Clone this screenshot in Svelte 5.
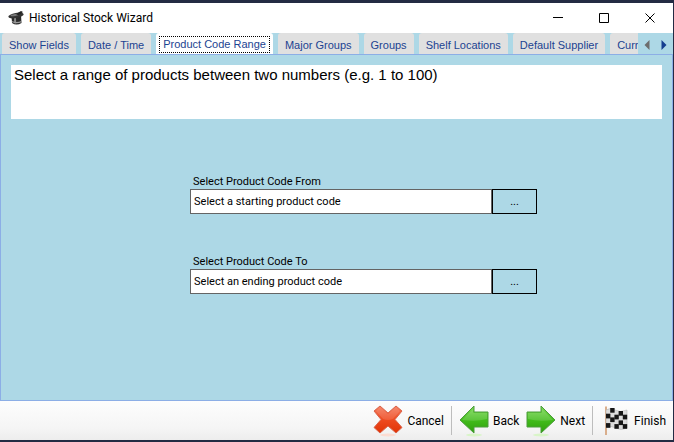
<script lang="ts">
  const tabs = [
    'Show Fields',
    'Date / Time',
    'Product Code Range',
    'Major Groups',
    'Groups',
    'Shelf Locations',
    'Default Supplier',
    'Curr'
  ];

  const fields = [
    { id: 'code-from', label: 'Select Product Code From', text: 'Select a starting product code' },
    { id: 'code-to', label: 'Select Product Code To', text: 'Select an ending product code' }
  ];

  // dark squares of the finish flag, as [column, row]
  const squares = [
    [1, 0], [3, 0],
    [0, 1], [2, 1], [4, 1],
    [1, 2], [3, 2],
    [0, 3], [2, 3], [4, 3]
  ];
  const wave = [0, -1, 1, 2, 1];

  let active = $state('Product Code Range');
  let values = $state(fields.map((field) => field.text));
</script>

{#snippet arrow(flip: boolean)}
  <svg class:flip width="30" height="32" viewBox="0 0 30 32" aria-hidden="true">
    <defs>
      <linearGradient id="green" x1="0" y1="0" x2="0" y2="1">
        <stop offset="0" stop-color="#7ed957" />
        <stop offset="0.5" stop-color="#43bd1c" />
        <stop offset="1" stop-color="#2ea00c" />
      </linearGradient>
    </defs>
    <ellipse cx="15" cy="30" rx="8" ry="1.5" fill="#d9f5c8" />
    <path d="M1 15 15 1v6h14v15H15v6z" fill="url(#green)" stroke="#4c9c3c" stroke-linejoin="round" />
    <path d="M3 15 14 4v4h14v6q-10 3-25 1z" fill="#fff" opacity="0.15" />
  </svg>
{/snippet}

<div class="window">
  <header class="title-bar">
    <svg width="16" height="16" viewBox="0 0 16 16" aria-hidden="true">
      <path d="M3.500 6 13 5.500l.5 7.500q-5 3-9.500 0z" fill="#2b2b2b" />
      <path d="M6 7.500l2-.2.2 6.200-2-.3z" fill="#8b8b8b" />
      <path d="M4 11q4.500 2 9.300 0v1.200q-4.500 2-9.200 0z" fill="#9a9a9a" />
      <ellipse cx="8" cy="5.500" rx="7.800" ry="2.600" transform="rotate(-10 8 5.500)" fill="#333" />
      <ellipse cx="7" cy="5" rx="4.500" ry="1" transform="rotate(-10 7 5)" fill="#777" />
      <path d="M8 4 13 1l2 1-4.500 3.500z" fill="#222" />
    </svg>
    <h1>Historical Stock Wizard</h1>
    <div class="caption-buttons">
      <button type="button" aria-label="Minimize">
        <svg width="11" height="11" viewBox="0 0 11 11"><path d="M0 4.500h10" /></svg>
      </button>
      <button type="button" aria-label="Maximize">
        <svg width="11" height="11" viewBox="0 0 11 11"><path d="M.5.5h9v9h-9z" /></svg>
      </button>
      <button type="button" aria-label="Close">
        <svg width="11" height="11" viewBox="0 0 11 11"><path d="M.5.5l9 9M9.500.5l-9 9" /></svg>
      </button>
    </div>
  </header>

  <nav class="tab-strip">
    <div class="tabs" role="tablist">
      {#each tabs as tab (tab)}
        <button
          type="button"
          role="tab"
          class:active={tab === active}
          aria-selected={tab === active}
          onclick={() => (active = tab)}
        >
          <span>{tab}</span>
        </button>
      {/each}
    </div>
    <div class="scrollers">
      <button type="button" aria-label="Scroll tabs left">
        <svg width="6" height="10" viewBox="0 0 6 10"><path d="M5.500 0v10L.5 5z" fill="#6d6d6d" /></svg>
      </button>
      <button type="button" aria-label="Scroll tabs right">
        <svg width="6" height="10" viewBox="0 0 6 10"><path d="M.5 0v10l5-5z" fill="#153e8f" /></svg>
      </button>
    </div>
  </nav>

  <main>
    <p class="intro">Select a range of products between two numbers (e.g. 1 to 100)</p>
    <form>
      {#each fields as field, i (field.id)}
        <div class="field">
          <label for={field.id}>{field.label}</label>
          <div class="picker">
            <input id={field.id} type="text" bind:value={values[i]} />
            <button type="button" aria-label="Browse: {field.label}">...</button>
          </div>
        </div>
      {/each}
    </form>
  </main>

  <footer>
    <button type="button">
      <svg width="30" height="32" viewBox="0 0 30 32" aria-hidden="true">
        <defs>
          <linearGradient id="red" x1="0" y1="0" x2="0" y2="1">
            <stop offset="0" stop-color="#f47a5c" />
            <stop offset="0.5" stop-color="#ee4a20" />
            <stop offset="1" stop-color="#e03406" />
          </linearGradient>
        </defs>
        <ellipse cx="15" cy="30" rx="8" ry="1.500" fill="#fbdcd2" />
        <path
          d="M7 1 15 8l8-7 6 5-7 8.500 7 8-6 5.500-8-7-8 7-6-5.500 7-8L1 6z"
          fill="url(#red)"
          stroke="#d9654c"
          stroke-linejoin="round"
        />
        <path d="M7 2 15 9l8-7 4 4-7 8q-5 2-10 0L3 6z" fill="#fff" opacity="0.12" />
      </svg>
      Cancel
    </button>
    <span class="divider"></span>
    <button type="button">{@render arrow(false)} Back</button>
    <button type="button">{@render arrow(true)} Next</button>
    <span class="divider"></span>
    <button type="button">
      <svg width="30" height="32" viewBox="0 0 30 32" aria-hidden="true">
        <path d="M6 1.500V30" stroke="#d9ae8c" stroke-width="2" />
        <path d="M6 5q4-3 9 0t12 0v18q-6 3-11 0t-10 0z" fill="#ddd" stroke="#aaa" stroke-width="0.500" />
        {#each squares as [col, row]}
          <rect x={6 + col * 4.200} y={4 + row * 4.700 + wave[col]} width="4.400" height="4.700" fill="#161616" />
        {/each}
      </svg>
      Finish
    </button>
  </footer>
</div>

<style>
  :global(body) {
    margin: 0;
    background: #232b43;
  }

  .window {
    box-sizing: border-box;
    min-height: 100vh;
    display: flex;
    flex-direction: column;
    border: solid #232b43;
    border-width: 3px 1px 2px 0;
    font-family: Roboto, 'Segoe UI', sans-serif;
    font-size: 12px;
    color: #000;
    background: #add8e6;
  }

  button {
    margin: 0;
    padding: 0;
    border: 0;
    font: inherit;
    color: inherit;
    background: none;
  }

  .title-bar {
    height: 30px;
    display: flex;
    align-items: center;
    padding-left: 8px;
    background: #fff;
  }

  h1 {
    flex: 1;
    margin: 0 0 0 5px;
    font-size: 12px;
    font-weight: 400;
  }

  .caption-buttons {
    display: flex;
    align-self: stretch;
  }

  .caption-buttons button {
    width: 46px;
    display: grid;
    place-items: center;
  }

  .caption-buttons path {
    fill: none;
    stroke: #000;
  }

  .tab-strip {
    height: 21px;
    display: flex;
    border-bottom: 1px solid #8caee6;
  }

  .tabs {
    flex: 1;
    min-width: 0;
    display: flex;
    gap: 5px;
    padding-left: 2px;
    overflow: hidden;
  }

  .tabs button {
    flex: none;
    padding: 2px 7px 0;
    border-radius: 3px 3px 0 0;
    font-family: 'Liberation Sans', Arial, sans-serif;
    font-size: 11px;
    white-space: nowrap;
    color: #1c4391;
    background: #e0e0e0;
  }

  .tabs .active {
    padding: 2px 3px 0;
    background: #fff;
  }

  .active span {
    display: block;
    padding: 0 3px;
    border: 1px dotted #000;
    line-height: 15px;
  }

  .scrollers {
    display: flex;
    gap: 11px;
    padding: 2px 6px 0;
  }

  .scrollers button {
    display: grid;
    place-items: center;
  }

  main {
    flex: 1;
    padding: 10px;
    border: solid #8caee6;
    border-width: 0 1px 1px;
  }

  .intro {
    min-height: 50px;
    margin: 0;
    padding: 1px 3px 3px;
    font-family: 'Liberation Sans', Arial, sans-serif;
    font-size: 15px;
    line-height: 18px;
    background: #fff;
  }

  form {
    width: 53.3%;
    margin: 56px 0 0 27.5%;
    display: grid;
    gap: 41px;
    font-size: 11px;
  }

  .field label {
    display: block;
    padding-left: 3px;
    line-height: 14px;
  }

  .picker {
    height: 25px;
    display: flex;
  }

  .picker input {
    box-sizing: border-box;
    flex: 1;
    min-width: 0;
    padding: 0 3px;
    border: 1px solid #646464;
    border-radius: 0;
    font: inherit;
    color: #000;
    background: #fff;
  }

  .picker button {
    width: 45px;
    border: 1px solid #000;
  }

  footer {
    height: 39px;
    display: flex;
    align-items: center;
    justify-content: flex-end;
    gap: 7px;
    padding-right: 7px;
    background: linear-gradient(#fdfdfd, #f5f5f5 70%, #ededed);
  }

  footer button {
    display: flex;
    align-items: center;
    gap: 4px;
  }

  .divider {
    width: 1px;
    height: 29px;
    background: #bdbdbd;
  }

  .flip {
    transform: scaleX(-1);
  }
</style>
